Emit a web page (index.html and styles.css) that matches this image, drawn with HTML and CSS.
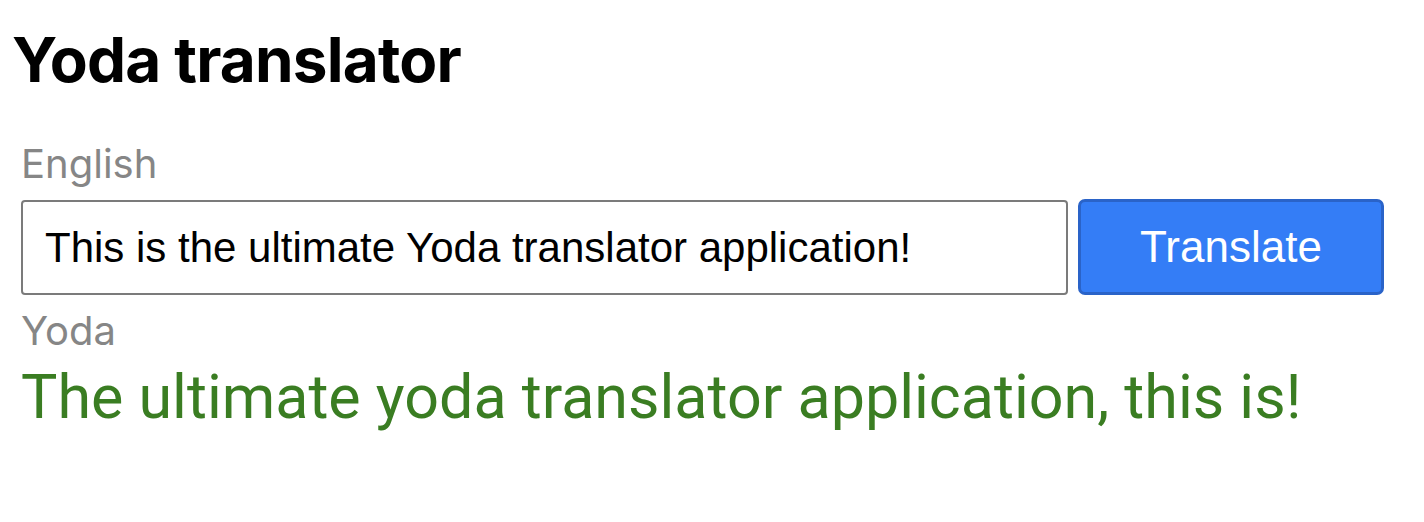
FILE: index.html
```html
<!DOCTYPE html>
<html lang="en">
<head>
<meta charset="utf-8">
<title>Yoda translator</title>
<link rel="stylesheet" href="styles.css">
</head>
<body>
<main class="app">
  <h1 class="title">Yoda translator</h1>
  <section class="form">
    <label class="label" for="src">English</label>
    <div class="row">
      <input id="src" class="input" type="text" value="This is the ultimate Yoda translator application!">
      <button class="btn" type="button">Translate</button>
    </div>
    <div class="label">Yoda</div>
    <div class="output">The ultimate yoda translator application, this is!</div>
  </section>
</main>
</body>
</html>
```

FILE: styles.css
```css
html, body {
  margin: 0;
  padding: 0;
  background: #fff;
}

body {
  font-family: Inter, "Noto Sans", sans-serif;
  color: #000;
}

.app {
  padding: 0 40px 0 12px;
}

.title {
  margin: 0;
  padding-top: 22px;
  font-size: 62px;
  font-weight: 700;
  line-height: 76px;
  letter-spacing: -0.8px;
}

.form {
  padding-left: 9px;
  margin-top: 44px;
  display: flex;
  flex-direction: column;
}

.label {
  display: block;
  color: #868686;
  font-family: Inter, Roboto, sans-serif;
  font-size: 40px;
  line-height: 44px;
}

.row {
  display: flex;
  gap: 10px;
  margin-top: 14px;
  margin-bottom: 14px;
}

.input {
  box-sizing: border-box;
  width: 1047px;
  height: 95px;
  border: 2px solid #7b7b7b;
  border-radius: 4px;
  padding: 0 22px;
  font-family: "Liberation Sans", Arial, sans-serif;
  font-size: 42px;
  color: #000;
  background: #fff;
  outline: none;
}

.btn {
  box-sizing: border-box;
  width: 306px;
  height: 96px;
  margin-top: -1px;
  background: #347df6;
  border: 3px solid #2a63c8;
  border-radius: 7px;
  color: #fff;
  font-family: "Liberation Sans", Arial, sans-serif;
  font-size: 44px;
  cursor: pointer;
}

.output {
  margin-top: 6px;
  color: #3a7d22;
  font-family: Roboto, Inter, sans-serif;
  font-size: 61px;
  line-height: 76px;
}
```
